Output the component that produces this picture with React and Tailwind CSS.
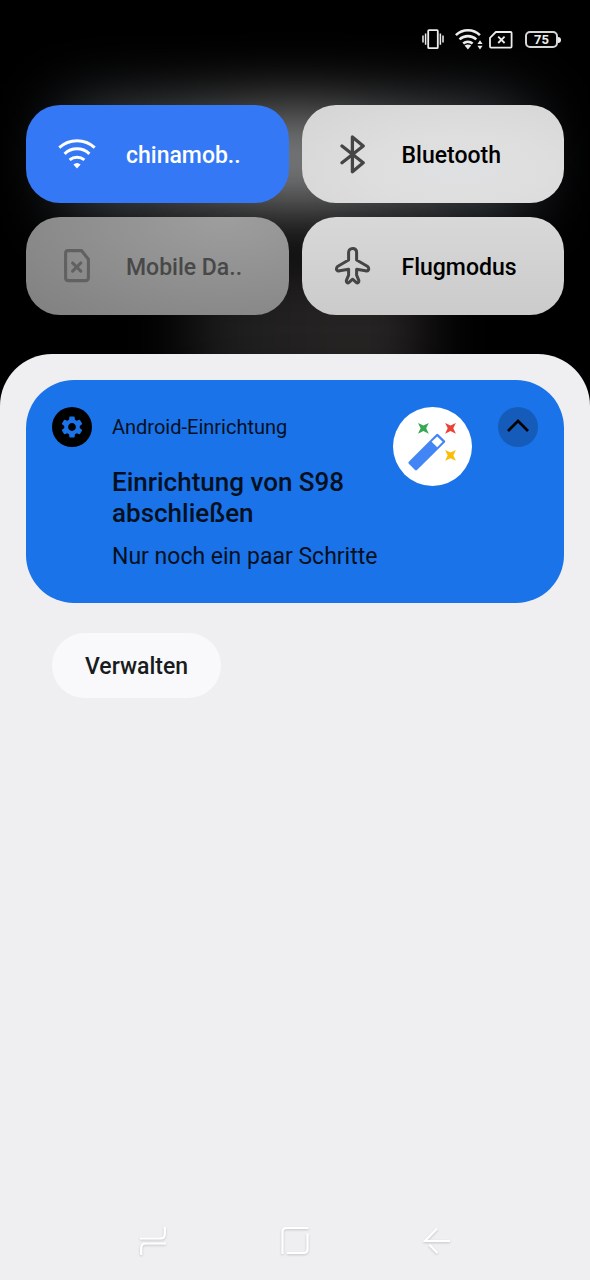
import { MdSettings } from "react-icons/md";

function StatusBar() {
  return (
    <header className="flex h-[105px] items-start justify-end pt-[27px] pr-[29px] text-[#ececec]">
      <svg className="mr-[11px]" width="22" height="24" viewBox="0 0 22 24" fill="none" stroke="currentColor" strokeWidth="1.8" aria-label="Vibration">
        <rect x="6.2" y="3.2" width="9.6" height="18" rx="0.8" />
        <path d="M1 8.6v7M3.6 6.4v11.4M18.4 6.4v11.4M21 8.6v7" strokeWidth="1.5" />
      </svg>
      <svg className="mr-[6px]" width="28" height="24" viewBox="0 0 28 24" fill="none" stroke="currentColor" strokeWidth="2.6" aria-label="WLAN">
        <path d="M0.9 8.2A17 17 0 0 1 24.9 8.2M4.5 12.4A12.4 12.4 0 0 1 21.3 12.4M8.2 16.5A7.4 7.4 0 0 1 17.6 16.5" />
        <path d="M9.6 18.6Q12.9 16.2 16.2 18.6L12.9 22.4Z" fill="currentColor" stroke="none" />
        <path d="M25 13.2L27.6 17h-5.2ZM25 22.6L27.6 18.8h-5.2Z" fill="currentColor" stroke="none" />
      </svg>
      <svg className="mr-3" width="24" height="24" viewBox="0 0 24 24" fill="none" stroke="currentColor" strokeWidth="1.8" aria-label="Keine SIM">
        <path d="M6.8 5H21.6a1 1 0 0 1 1 1v13.6a1 1 0 0 1-1 1H2a1 1 0 0 1-1-1V10.8Z" strokeLinejoin="round" />
        <path d="M9.2 9.6l6.4 6.4M15.6 9.6l-6.4 6.4" />
      </svg>
      <div className="mt-1 flex items-center">
        <span className="flex h-[17px] w-[33px] items-center justify-center rounded-[5px] border-2 border-[#d6d6d6] text-[13px] leading-none font-bold">
          75
        </span>
        <span className="h-[6px] w-[3px] rounded-r bg-[#ececec]" />
      </div>
    </header>
  );
}

function WifiIcon() {
  return (
    <svg width="38" height="32" viewBox="0 0 38 32" fill="none" stroke="currentColor" strokeWidth="3" aria-hidden="true">
      <path d="M1.3 9.6A26 26 0 0 1 36.7 9.6M6.6 15.8A18 18 0 0 1 31.4 15.8M11.6 21.8A11.6 11.6 0 0 1 26.4 21.8" />
      <path d="M15.4 26.6Q19 23.6 22.6 26.6L19 30.6Z" fill="currentColor" stroke="none" />
    </svg>
  );
}

function BluetoothIcon() {
  return (
    <svg width="26" height="39" viewBox="0 0 26 39" fill="none" stroke="currentColor" strokeWidth="3.3" strokeLinecap="round" strokeLinejoin="round" aria-hidden="true">
      <path d="M2 11L23.2 27.8L12.4 36.7V2L23.2 11L2 27.8" />
    </svg>
  );
}

function SimOffIcon() {
  return (
    <svg width="26" height="34" viewBox="0 0 26 34" fill="none" stroke="currentColor" strokeWidth="3.1" strokeLinecap="round" strokeLinejoin="round" aria-hidden="true">
      <path d="M4 1.6H17.4L24.4 10.2V29a2.6 2.6 0 0 1-2.6 2.6H4A2.6 2.6 0 0 1 1.6 29V4.2A2.6 2.6 0 0 1 4 1.6Z" />
      <path d="M8.6 14l8.2 8.2M16.8 14l-8.2 8.2" />
    </svg>
  );
}

function PlaneIcon() {
  return (
    <svg width="36" height="38" viewBox="0 0 36 38" fill="none" stroke="currentColor" strokeWidth="3" strokeLinecap="round" strokeLinejoin="round" aria-hidden="true">
      <path d="M17.6 1.6C14.8 1.6 13.6 3.4 13.6 5.6V13L2.9 19.2C1.4 20.3 1.2 22.2 1.8 23C2.4 23.8 3.4 24.1 4.6 23.8L13.6 22.3V28.2L11.4 33.4C11 35.2 12.6 36.6 14 35.4L17.6 32.2L21.2 35.4C22.6 36.6 24.2 35.2 23.8 33.4L21.6 28.2V22.3L30.6 23.8C31.8 24.1 32.8 23.8 33.4 23C34 22.2 33.8 20.3 32.3 19.2L21.6 13V5.6C21.6 3.4 20.4 1.6 17.6 1.6Z" />
    </svg>
  );
}

function Tile({ icon, label, surface, iconColor, textColor, ...rest }) {
  return (
    <button
      type="button"
      className={`flex h-[98px] items-center gap-[30px] rounded-[34px] pl-8 text-left ${surface}`}
      {...rest}
    >
      <span className={`flex w-[38px] shrink-0 justify-center ${iconColor}`}>{icon}</span>
      <span className={`pt-[3px] text-[23px] leading-7 font-medium whitespace-nowrap ${textColor}`}>{label}</span>
    </button>
  );
}

function QuickSettings() {
  return (
    <section aria-label="Schnelleinstellungen" className="grid grid-cols-2 gap-x-[13px] gap-y-[14px] px-[26px]">
      <Tile
        icon={<WifiIcon />}
        label="chinamob.."
        aria-pressed="true"
        surface="bg-[#3478f6]"
        iconColor="text-white"
        textColor="text-white"
      />
      <Tile
        icon={<BluetoothIcon />}
        label="Bluetooth"
        aria-pressed="false"
        surface="bg-[radial-gradient(ellipse_at_60%_65%,#dfe0e2,#dedede_40%,#d3d4d3)]"
        iconColor="text-[#454545]"
        textColor="text-black"
      />
      <Tile
        icon={<SimOffIcon />}
        label="Mobile Da.."
        disabled
        surface="bg-[radial-gradient(ellipse_at_75%_0%,#9e9e9e,#8c8c8c_60%,#808080)]"
        iconColor="text-[#616161]"
        textColor="text-[#484848]"
      />
      <Tile
        icon={<PlaneIcon />}
        label="Flugmodus"
        aria-pressed="false"
        surface="bg-linear-to-b from-[#d8d8d8] to-[#cbcbcb]"
        iconColor="text-[#454545]"
        textColor="text-black"
      />
    </section>
  );
}

const STAR = "M-5.4-5.4L0-2.8L5.4-5.4L2.8 0L5.4 5.4L0 2.8L-5.4 5.4L-2.8 0Z";

function WandPicture() {
  return (
    <svg className="shrink-0" width="79" height="79" viewBox="0 0 79 79" aria-hidden="true">
      <circle cx="39.5" cy="39.5" r="39.5" fill="#fff" />
      <path d="M44.3 28.3L50.8 34.6L23 62L16.8 55.8Z" fill="#4285f4" stroke="#4285f4" strokeWidth="2.8" strokeLinejoin="round" />
      <path d="M38.6 34.8L44.2 29.4L49.6 34.8L44.2 40.2Z" fill="#fff" />
      <path d={STAR} transform="translate(30.4 21.3)" fill="#34a853" />
      <path d={STAR} transform="translate(57.5 21.3)" fill="#ea4335" />
      <path d={STAR} transform="translate(57.5 48.4)" fill="#fbbc04" />
    </svg>
  );
}

function Notification() {
  return (
    <article className="flex items-start rounded-[48px] bg-[#1a73e8] px-[26px] pt-[27px] pb-8 text-[#05101f]">
      <span className="flex size-10 shrink-0 items-center justify-center rounded-full bg-black text-[#1a73e8]">
        <MdSettings size={26} aria-hidden="true" />
      </span>
      <div className="ml-5 min-w-0 flex-1 pr-4">
        <p className="text-xl leading-10">Android-Einrichtung</p>
        <h2 className="mt-5 text-[26px] leading-[31px] font-medium">Einrichtung von S98 abschließen</h2>
        <p className="mt-[14px] text-[23px] leading-7 whitespace-nowrap">Nur noch ein paar Schritte</p>
      </div>
      <WandPicture />
      <button
        type="button"
        aria-label="Minimieren"
        className="ml-[26px] flex size-10 shrink-0 items-center justify-center rounded-full bg-[#155cba] text-black"
      >
        <svg width="24" height="16" viewBox="0 0 24 16" fill="none" stroke="currentColor" strokeWidth="2.7" aria-hidden="true">
          <path d="M2 12L12 2L22 12" />
        </svg>
      </button>
    </article>
  );
}

function NavBar() {
  return (
    <nav className="mt-auto flex items-center justify-center gap-[114px] pb-6 text-white">
      <button type="button" aria-label="Letzte Apps" className="drop-shadow-[0_1px_1px_rgba(0,0,0,0.18)]">
        <svg width="28" height="30" viewBox="0 0 28 30" fill="none" stroke="currentColor" strokeWidth="2.2">
          <path d="M1 12.5H21.5Q25.8 12.5 25.8 8V1M27 17.5H6.5Q2.2 17.5 2.2 22V29" />
        </svg>
      </button>
      <button type="button" aria-label="Startbildschirm" className="drop-shadow-[0_1px_1px_rgba(0,0,0,0.18)]">
        <svg width="28" height="30" viewBox="0 0 28 30" fill="none" stroke="currentColor" strokeWidth="2.2">
          <path d="M1.5 28V6Q1.5 2 5.5 2H27.5M6 27H22.5Q26.5 27 26.5 23V7.5" />
        </svg>
      </button>
      <button type="button" aria-label="Zurück" className="drop-shadow-[0_1px_1px_rgba(0,0,0,0.18)]">
        <svg width="28" height="30" viewBox="0 0 28 30" fill="none" stroke="currentColor" strokeWidth="2.2">
          <path d="M27 15H2L14 2.6M6.4 18.8L14.4 27" />
        </svg>
      </button>
    </nav>
  );
}

export default function App() {
  return (
    <div className="relative isolate flex min-h-screen flex-col overflow-hidden bg-black font-['Roboto',sans-serif]">
      <div className="absolute inset-x-[60px] top-[106px] -z-10 h-[106px] bg-linear-to-r from-[#323940] via-[#828282] to-[#323940] blur-[32px]" />
      <div className="absolute right-[170px] left-[190px] top-[260px] -z-10 h-[140px] bg-linear-to-r from-[#1c1c1c] to-[#2b2727] blur-[32px]" />
      <StatusBar />
      <QuickSettings />
      <main className="mt-[39px] flex flex-1 flex-col rounded-t-[52px] bg-[#efeff1] pt-[26px]">
        <div className="px-[26px]">
          <Notification />
          <button
            type="button"
            className="mt-[30px] ml-[26px] h-[65px] rounded-full bg-[#f9f9fb] px-[33px] pt-1 text-[23px] font-medium text-[#191c1d]"
          >
            Verwalten
          </button>
        </div>
        <NavBar />
      </main>
    </div>
  );
}
